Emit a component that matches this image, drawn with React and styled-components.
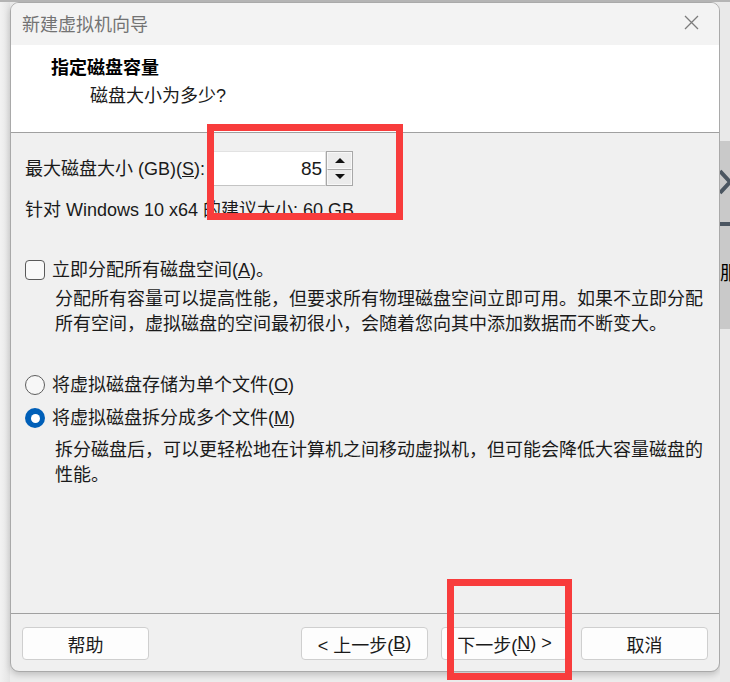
import React from 'react';
import styled, {createGlobalStyle} from 'styled-components';

const GlobalStyle = createGlobalStyle`
  html, body {
    margin: 0;
    padding: 0;
    background: #ececec;
  }
  body {
    font-family: "Liberation Sans", "Noto Sans CJK SC", sans-serif;
    color: #1a1a1a;
  }
`;

const Page = styled.div`
  position: relative;
  width: 730px;
  height: 682px;
  overflow: hidden;
  background: #ececec;
  border-top: 2px solid #b4b4b4;
  box-sizing: border-box;
`;

const Stage = styled.div`
  display: flex;
  align-items: flex-start;
  height: 100%;
`;

const Gutter = styled.div`
  width: 10px;
  flex: none;
  align-self: stretch;
  background: linear-gradient(90deg, #f2f2f2, #e4e4e4);
`;

const Window = styled.div`
  width: 710px;
  height: 670px;
  flex: none;
  box-sizing: border-box;
  border: 1px solid #a9a9a9;
  border-radius: 9px;
  background: #f0f0f0;
  display: flex;
  flex-direction: column;
  overflow: hidden;
  box-shadow: 0 3px 6px rgba(0, 0, 0, 0.18);
`;

const TitleBar = styled.div`
  height: 42px;
  flex: none;
  display: flex;
  align-items: center;
  justify-content: space-between;
  padding: 0 20px 3px 11px;
  box-sizing: border-box;
  background: #f3f3f3;
  font-family: "Noto Sans CJK SC", sans-serif;
  font-size: 18px;
  color: #737373;
`;

const Header = styled.div`
  height: 88px;
  flex: none;
  box-sizing: border-box;
  padding: 11px 0 0 40px;
  background: #ffffff;
  border-bottom: 1px solid #a0a0a0;
`;

const HeaderTitle = styled.div`
  font-size: 18px;
  line-height: 25px;
  font-weight: bold;
  color: #000;
`;

const HeaderSub = styled.div`
  font-size: 18px;
  line-height: 25px;
  margin: 3px 0 0 39px;
  color: #1a1a1a;
`;

const Body = styled.div`
  flex: 1;
  padding: 18px 0 0 14px;
  font-size: 18px;
`;

const SizeRow = styled.div`
  display: flex;
  align-items: center;
  height: 35px;
`;

const Label = styled.span`
  line-height: 24px;
  margin-right: 7px;
`;

const NumberBox = styled.div`
  width: 114px;
  height: 35px;
  box-sizing: border-box;
  background: #fff;
  border: 1px solid #e2e2e2;
  border-bottom-color: #c4c4c4;
  display: flex;
  align-items: center;
  justify-content: flex-end;
  padding-right: 3px;
  font-size: 19px;
`;

const Spinner = styled.div`
  width: 27px;
  height: 35px;
  display: flex;
  flex-direction: column;
  box-sizing: border-box;
  border: 1px solid #a8a8a8;
`;

const SpinButton = styled.div`
  flex: 1;
  display: flex;
  align-items: center;
  justify-content: center;
  background: #ececec;
  border: 1px solid #f8f8f8;
  & + & {
    border-top: 1px solid #a8a8a8;
  }
`;

const Arrow = styled.span`
  width: 0;
  height: 0;
  border-left: 5px solid transparent;
  border-right: 5px solid transparent;
  ${p => (p.$up ? 'border-bottom: 5px solid #111;' : 'border-top: 5px solid #111;')}
`;

const Line = styled.div`
  line-height: 24px;
  margin-top: ${p => p.$top || 0}px;
`;

const OptionRow = styled.div`
  display: flex;
  align-items: center;
  gap: 7px;
  line-height: 24px;
  margin-top: ${p => p.$top}px;
`;

const CheckBox = styled.span`
  width: 20px;
  height: 20px;
  box-sizing: border-box;
  border: 1px solid #5a5a5a;
  border-radius: 4px;
  background: #f9f9f9;
  flex: none;
`;

const Radio = styled.span`
  width: 20px;
  height: 20px;
  box-sizing: border-box;
  border-radius: 50%;
  flex: none;
  display: flex;
  align-items: center;
  justify-content: center;
  border: ${p => (p.$on ? 'none' : '1px solid #5e5e5e')};
  background: ${p => (p.$on ? '#005fb8' : '#f7f7f7')};
  &::after {
    content: '';
    display: ${p => (p.$on ? 'block' : 'none')};
    width: 9px;
    height: 9px;
    border-radius: 50%;
    background: #fff;
  }
`;

const Note = styled.div`
  margin: ${p => p.$top}px 0 0 30px;
  line-height: 25px;
  color: #1a1a1a;
`;

const Footer = styled.div`
  flex: none;
  display: flex;
  align-items: center;
  padding: 13px 11px 11px 11px;
  border-top: 1px solid #a0a0a0;
`;

const Button = styled.div`
  width: 127px;
  height: 33px;
  box-sizing: border-box;
  background: #fdfdfd;
  border: 1px solid #cfcfcf;
  border-radius: 4px;
  display: flex;
  align-items: center;
  justify-content: center;
  font-size: 18px;
  margin-left: ${p => p.$gap || 0}px;
`;

const Spacer = styled.div`
  flex: 1;
`;

const SideStrip = styled.div`
  flex: 1;
  align-self: stretch;
  display: flex;
  flex-direction: column;
  background: #e9e9e9;
  overflow: hidden;
`;

const SidePanel = styled.div`
  margin-top: 139px;
  height: 188px;
  background: #c9c9c9;
  display: flex;
  flex-direction: column;
  padding-top: 27px;
  box-sizing: border-box;
  color: #000;
`;

const SideBar = styled.div`
  height: 4px;
  background: #4b5661;
  margin-top: 26px;
`;

const SideText = styled.div`
  font-family: "Noto Sans CJK SC", sans-serif;
  font-size: 19px;
  line-height: 20px;
  margin-top: 36px;
  white-space: nowrap;
`;

const Mark = styled.div`
  position: absolute;
  left: ${p => p.$x}px;
  top: ${p => p.$y}px;
  width: ${p => p.$w}px;
  height: ${p => p.$h}px;
  box-sizing: border-box;
  border: 7px solid #f83c3c;
  pointer-events: none;
`;

const CloseIcon = () => (
  <svg width="15" height="15" viewBox="0 0 15 15">
    <path d="M1 1L14 14M14 1L1 14" stroke="#7c7c7c" strokeWidth="1.3" fill="none" />
  </svg>
);

export default function App() {
  return (
    <>
      <GlobalStyle />
      <Page>
        <Stage>
          <Gutter />
          <Window>
            <TitleBar>
              <span>新建虚拟机向导</span>
              <CloseIcon />
            </TitleBar>
            <Header>
              <HeaderTitle>指定磁盘容量</HeaderTitle>
              <HeaderSub>磁盘大小为多少?</HeaderSub>
            </Header>
            <Body>
              <SizeRow>
                <Label>最大磁盘大小 (GB)(<u>S</u>):</Label>
                <NumberBox>85</NumberBox>
                <Spinner>
                  <SpinButton><Arrow $up /></SpinButton>
                  <SpinButton><Arrow /></SpinButton>
                </Spinner>
              </SizeRow>
              <Line $top={12}>针对 Windows 10 x64 的建议大小: 60 GB</Line>
              <OptionRow $top={36}>
                <CheckBox />
                <span>立即分配所有磁盘空间(<u>A</u>)。</span>
              </OptionRow>
              <Note $top={5}>
                分配所有容量可以提高性能，但要求所有物理磁盘空间立即可用。如果不立即分配
                <br />
                所有空间，虚拟磁盘的空间最初很小，会随着您向其中添加数据而不断变大。
              </Note>
              <OptionRow $top={36}>
                <Radio />
                <span>将虚拟磁盘存储为单个文件(<u>O</u>)</span>
              </OptionRow>
              <OptionRow $top={9}>
                <Radio $on />
                <span>将虚拟磁盘拆分成多个文件(<u>M</u>)</span>
              </OptionRow>
              <Note $top={8}>
                拆分磁盘后，可以更轻松地在计算机之间移动虚拟机，但可能会降低大容量磁盘的
                <br />
                性能。
              </Note>
            </Body>
            <Footer>
              <Button>帮助</Button>
              <Spacer />
              <Button>&lt; 上一步(<u>B</u>)</Button>
              <Button $gap={13}>下一步(<u>N</u>) &gt;</Button>
              <Button $gap={13}>取消</Button>
            </Footer>
          </Window>
          <SideStrip>
            <SidePanel>
              <svg width="10" height="28" viewBox="0 0 10 28">
                <path d="M0 3L10 14L0 25" stroke="#4b5661" strokeWidth="4" fill="none" />
              </svg>
              <SideBar />
              <SideText>服</SideText>
            </SidePanel>
          </SideStrip>
        </Stage>
        <Mark $x={207} $y={122} $w={196} $h={96} />
        <Mark $x={447} $y={577} $w={125} $h={101} />
      </Page>
    </>
  );
}
